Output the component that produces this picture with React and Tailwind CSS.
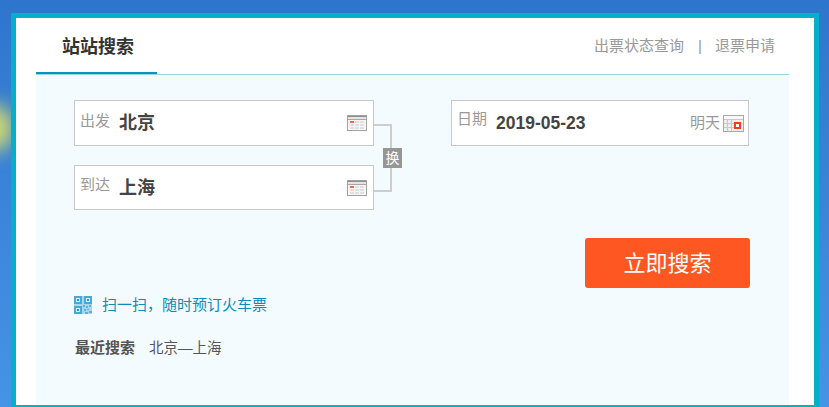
import React from 'react';

const CJK = "font-['Liberation_Sans','Noto_Sans_CJK_SC',sans-serif]";

function CalendarIcon() {
  return (
    <svg width="20" height="16" viewBox="0 0 20 16" className="shrink-0">
      <rect x="0.5" y="0.5" width="19" height="15" fill="#f6f6f6" stroke="#a2a2a2" />
      <rect x="1" y="1" width="18" height="1" fill="#8f8f8f" />
      <rect x="1" y="2" width="18" height="2" fill="#e4e4e4" />
      <rect x="1" y="4" width="18" height="1" fill="#a8a8a8" />
      <rect x="3" y="6" width="4" height="2" fill="#f4694a" />
      <path d="M8 6h4v2H8zM13 6h4v2h-4zM3 9h4v2H3zM8 9h4v2H8zM13 9h4v2h-4zM3 12h4v2H3zM8 12h4v2H8zM13 12h4v2h-4z" fill="#e0e0e0" />
    </svg>
  );
}

function TomorrowIcon() {
  return (
    <svg width="21" height="17" viewBox="0 0 21 17" className="shrink-0">
      <rect x="0.5" y="0.5" width="20" height="16" fill="#efefef" stroke="#a9a9a9" />
      <rect x="1" y="1" width="19" height="3" fill="#f8f8f8" />
      <path d="M1 4.5h19M4.5 5v11M8.5 5v11M1 8.5h10M1 12.5h10" stroke="#c8c8c8" strokeWidth="1" />
      <rect x="12" y="8" width="5" height="5" fill="#fff" stroke="#fb3c16" strokeWidth="2" />
    </svg>
  );
}

function QrIcon() {
  return (
    <svg width="18" height="18" viewBox="0 0 18 18" className="shrink-0">
      <rect width="18" height="18" fill="#a9d6ea" />
      <path d="M0 0h8v8H0zM10 0h8v8h-8zM0 10h8v8H0z" fill="#47a9d4" />
      <path d="M2 2h4v4H2zM12 2h4v4h-4zM2 12h4v4H2z" fill="#d9eef7" />
      <path d="M3 3h2v2H3zM13 3h2v2h-2zM3 13h2v2H3z" fill="#2a95c6" />
      <path d="M9 9h2v2H9zM12 10h2v2h-2zM15 9h2v2h-2zM10 13h2v2h-2zM13 13h2v1h-2zM15 15h3v2h-3zM11 16h3v2h-3z" fill="#5db4db" />
    </svg>
  );
}

function Field({ label, value, h, mt }) {
  return (
    <div className={`flex items-center ${h} border border-[#c8c8c8] bg-white pl-[5px] pr-[6px]`}>
      <span className="-mt-[4px] w-[39px] text-[15px] text-[#999]">{label}</span>
      <span className={`${mt} text-[18px] font-bold text-[#444]`}>{value}</span>
      <span className="ml-auto"><CalendarIcon /></span>
    </div>
  );
}

export default function App() {
  return (
    <div className={`relative h-[407px] w-[829px] overflow-hidden bg-gradient-to-b from-[#2e76cd] to-[#4694e6] pl-[11px] pt-[13px] ${CJK}`}>
      <div className="absolute left-[-38px] top-[104px] h-[48px] w-[52px] rounded-full bg-[#d3dc6c] blur-[10px]"></div>

      <div className="relative h-[397px] w-[808px] border-[5px] border-[#02b0cb] bg-white pl-[20px] pr-[25px]">
        <div className="flex h-[56px] items-start justify-between">
          <div className="h-[56px] w-[121px] border-b-[2px] border-[#0a93bc] pl-[26px] pt-[16px] text-[18px] font-bold leading-[26px] text-[#333]">
            站站搜索
          </div>
          <div className="flex items-center pr-[14px] pt-[18px] text-[15px] leading-[20px] text-[#999]">
            <span>出票状态查询</span>
            <span className="ml-[14px] mr-[13px]">|</span>
            <span>退票申请</span>
          </div>
        </div>

        <div className="h-[331px] border-t border-[#95d8de] bg-[#f3fbfe] pl-[38px] pt-[25px]">
          <div className="flex items-start">
            <div className="flex w-[300px] flex-col gap-[19px]">
              <Field label="出发" value="北京" h="h-[46px]" mt="mt-0" />
              <Field label="到达" value="上海" h="h-[45px]" mt="mt-[2px]" />
            </div>

            <div className="relative h-[110px] w-[77px]">
              <div className="absolute left-0 top-[24px] h-[24px] w-[18px] border-r-2 border-t-2 border-[#cdcdcd]"></div>
              <div className="absolute left-0 top-[68px] h-[24px] w-[18px] border-b-2 border-r-2 border-[#cdcdcd]"></div>
              <div className="absolute left-[9px] top-[48px] flex h-[20px] w-[19px] items-center justify-center bg-[#969696] text-[14px] text-white">换</div>
            </div>

            <div className="flex h-[46px] w-[298px] items-center border border-[#c8c8c8] bg-white pl-[5px] pr-[4px]">
              <span className="-mt-[7px] w-[39px] text-[15px] text-[#999]">日期</span>
              <span className="text-[17.5px] font-bold text-[#444]">2019-05-23</span>
              <span className="ml-auto mr-[3px] text-[15px] text-[#999]">明天</span>
              <TomorrowIcon />
            </div>
          </div>

          <div className="mt-[28px] flex justify-end pr-[39px]">
            <div className="flex h-[50px] w-[165px] items-center justify-center rounded-[3px] bg-[#ff5722] text-[22px] text-white">
              立即搜索
            </div>
          </div>

          <div className="mt-[8px] flex items-center gap-[10px] text-[15px] leading-[18px] text-[#0a8cb8]">
            <QrIcon />
            <span>扫一扫，随时预订火车票</span>
          </div>

          <div className="mt-[24px] flex items-center text-[15px] leading-[20px] text-[#555]">
            <span className="w-[75px] pl-[1px] font-bold">最近搜索</span>
            <span className="text-[14.5px]">北京—上海</span>
          </div>
        </div>
      </div>
    </div>
  );
}
